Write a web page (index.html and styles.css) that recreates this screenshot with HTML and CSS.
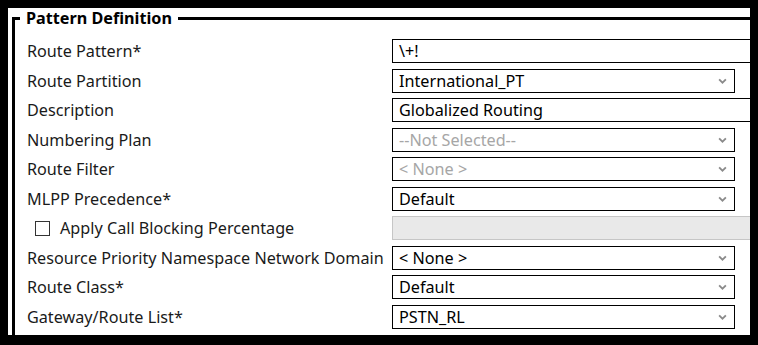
FILE: index.html
```html
<!DOCTYPE html>
<html lang="en">
<head>
    <meta charset="UTF-8" />
    <title>Pattern Definition</title>
    <link rel="stylesheet" href="styles.css">
</head>
<body>
    <div class="frame">
        <fieldset class="pattern">
            <legend>Pattern Definition</legend>
            <div class="form">
                <label>Route Pattern*</label>
                <div class="field text">\+!</div>

                <label>Route Partition</label>
                <div class="field select">International_PT<svg class="chev" viewBox="0 0 8 5"><path d="M1 1l3 3 3-3"/></svg></div>

                <label>Description</label>
                <div class="field text">Globalized Routing</div>

                <label>Numbering Plan</label>
                <div class="field select disabled">--Not Selected--<svg class="chev" viewBox="0 0 8 5"><path d="M1 1l3 3 3-3"/></svg></div>

                <label>Route Filter</label>
                <div class="field select disabled">&lt; None &gt;<svg class="chev" viewBox="0 0 8 5"><path d="M1 1l3 3 3-3"/></svg></div>

                <label>MLPP Precedence*</label>
                <div class="field select">Default<svg class="chev" viewBox="0 0 8 5"><path d="M1 1l3 3 3-3"/></svg></div>

                <label class="check"><span class="box"></span>Apply Call Blocking Percentage</label>
                <div class="field text off"></div>

                <label>Resource Priority Namespace Network Domain</label>
                <div class="field select">&lt; None &gt;<svg class="chev" viewBox="0 0 8 5"><path d="M1 1l3 3 3-3"/></svg></div>

                <label>Route Class*</label>
                <div class="field select">Default<svg class="chev" viewBox="0 0 8 5"><path d="M1 1l3 3 3-3"/></svg></div>

                <label>Gateway/Route List*</label>
                <div class="field select">PSTN_RL<svg class="chev" viewBox="0 0 8 5"><path d="M1 1l3 3 3-3"/></svg></div>
            </div>
        </fieldset>
    </div>
</body>
</html>
```

FILE: styles.css
```css
body {
    margin: 0;
    background: #000;
    font-family: "Noto Sans", "Open Sans", sans-serif;
    font-size: 16.2px;
    color: #1a1a1a;
}
.frame {
    margin: 8px 8px 0 8px;
    height: 327px;
    overflow: hidden;
    background: #fff;
}
.pattern {
    margin: 0 0 0 4px;
    padding: 11px 0 40px 12px;
    width: 800px;
    border: 3px solid #000;
    min-width: 0;
}
.pattern legend {
    font-weight: bold;
    font-size: 16.2px;
    line-height: 20px;
    padding: 0 6px;
    margin-left: -7px;
    color: #000;
}
.form {
    display: grid;
    grid-template-columns: 365px auto;
    row-gap: 5.5px;
    align-items: center;
}
.form label {
    white-space: nowrap;
    line-height: 24px;
}
.check {
    display: flex;
    align-items: center;
    padding-left: 8px;
}
.check .box {
    width: 13px;
    height: 13px;
    border: 1.5px solid #333;
    margin-right: 10px;
}
.field {
    height: 24px;
    box-sizing: border-box;
    border: 1px solid #000;
    padding: 0 6px;
    line-height: 22px;
    color: #000;
    display: flex;
    align-items: center;
    white-space: nowrap;
}
.text {
    width: 420px;
}
.select {
    width: 343px;
    justify-content: space-between;
}
.disabled {
    color: #a6a6a6;
}
.off {
    background: #e9e9e9;
    border-color: #c6c6c6;
}
.chev {
    width: 9px;
    height: 6px;
    margin-right: 1px;
    fill: none;
    stroke: #8a8a8a;
    stroke-width: 1.6;
}
```
